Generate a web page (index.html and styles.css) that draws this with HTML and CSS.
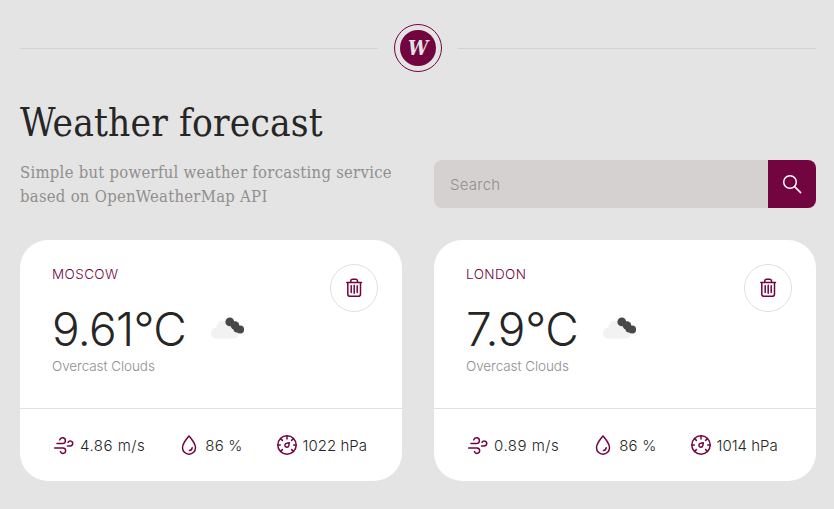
FILE: index.html
```html
<!DOCTYPE html>
<html lang="en">
<head>
<meta charset="utf-8">
<title>Weather forecast</title>
<link rel="stylesheet" href="styles.css">
</head>
<body>
<svg class="sprite" aria-hidden="true">
  <symbol id="trash" viewBox="0 0 24 24"><path d="M4.800 6.400h14.700M5.800 6.400v11.500a2.400 2.400 0 0 0 2.400 2.400h7.900a2.400 2.400 0 0 0 2.400-2.400V6.400M8.800 6.200V5a1.800 1.800 0 0 1 1.800-1.800h3.100A1.800 1.800 0 0 1 15.500 5v1.200M9.200 9.800v6.700M12.200 9.300v8M15.200 9.800v6.700"/></symbol>
  <symbol id="wind" viewBox="0 0 24 24"><path d="M5 10.600h5.500a2.900 2.900 0 1 0-2.800-3.700M15.500 13h2.700a2.500 2.500 0 1 0-2.200-3.700M2.700 15h8.300a2.700 2.700 0 1 1-2.600 3.600"/></symbol>
  <symbol id="drop" viewBox="0 0 24 24"><path d="M12 3C9.500 6 5.500 10.500 5.500 14.700a6.500 6.500 0 0 0 13 0C18.500 10.500 14.500 6 12 3zM15.200 14.700a3.300 3.300 0 0 1-2.700 2.900"/></symbol>
  <symbol id="gauge" viewBox="0 0 24 24"><circle cx="12" cy="12" r="9.200"/><path d="M12 3v3M5.600 5.600l1.800 1.800M3 12h2.300M5.600 18.400l1.800-1.800M18.400 18.400l-1.800-1.800M21 12h-2.300M18.400 5.600l-1.800 1.800M14.300 9.700l-2.500.5a2 2 0 1 0 2 2.500z"/></symbol>
  <symbol id="clouds" viewBox="0 0 36 24"><g class="cloud-light"><circle cx="14" cy="11" r="6.500"/><circle cx="20" cy="13" r="7"/><rect x="2" y="11.700" width="28" height="11" rx="5.500"/></g><g class="cloud-dark"><circle cx="20.800" cy="5.900" r="4.400"/><circle cx="26" cy="9.500" r="4.300"/><circle cx="31.200" cy="13.500" r="3.900"/><circle cx="28" cy="13" r="3.500"/></g></symbol>
</svg>
<main class="page">
  <header class="brand"><span class="rule"></span><span class="ring"><span class="logo">W</span></span><span class="rule"></span></header>
  <section class="intro">
    <div class="copy"><h1>Weather forecast</h1><p>Simple but powerful weather forcasting service<br>based on OpenWeatherMap API</p></div>
    <form class="search"><input type="text" placeholder="Search" aria-label="Search"><button type="button" aria-label="Find"><svg viewBox="0 0 24 24"><circle cx="10" cy="10" r="6.300"/><path d="M14.600 14.600l6 6"/></svg></button></form>
  </section>
  <section class="cards">
    <article class="card">
      <div class="top"><h2>MOSCOW</h2><div class="temperature"><span class="value moscow">9.61°C</span><svg class="clouds"><use href="#clouds"/></svg></div><p class="condition">Overcast Clouds</p><button class="remove" aria-label="Remove Moscow"><svg><use href="#trash"/></svg></button></div>
      <div class="metrics"><span class="speed"><svg><use href="#wind"/></svg>4.86 m/s</span><span class="humidity"><svg><use href="#drop"/></svg>86 %</span><span class="pressure"><svg><use href="#gauge"/></svg>1022 hPa</span></div>
    </article>
    <article class="card">
      <div class="top"><h2>LONDON</h2><div class="temperature"><span class="value london">7.9°C</span><svg class="clouds"><use href="#clouds"/></svg></div><p class="condition">Overcast Clouds</p><button class="remove" aria-label="Remove London"><svg><use href="#trash"/></svg></button></div>
      <div class="metrics"><span class="speed"><svg><use href="#wind"/></svg>0.89 m/s</span><span class="humidity"><svg><use href="#drop"/></svg>86 %</span><span class="pressure"><svg><use href="#gauge"/></svg>1014 hPa</span></div>
    </article>
  </section>
</main>
</body>
</html>
```
FILE: styles.css
```css
* { box-sizing: border-box; }
body { margin: 0; background: #e4e4e4; color: #262626; font-family: Inter, sans-serif; font-weight: 300; }
h1, h2, p { margin: 0; font-weight: inherit; }
svg { fill: none; stroke: currentColor; stroke-width: 1.5; stroke-linecap: round; stroke-linejoin: round; flex: none; }
.sprite { display: none; }
.page { padding: 24px 18px 28px 20px; }
.brand { display: flex; align-items: center; gap: 16px; height: 48px; }
.rule { flex: 1; height: 1px; background: #d4d2d2; }
.ring { width: 48px; height: 48px; padding: 5px; border: 1px solid #720440; border-radius: 50%; }
.logo { display: block; height: 36px; border-radius: 50%; background: #720440; color: #e4e4e4; text-align: center; font: italic bold 20px/37px "DejaVu Serif Condensed", serif; }
.intro { display: grid; grid-template-columns: 382px 382px; gap: 32px; height: 136px; align-items: end; }
.copy { margin-bottom: -1px; font-family: "DejaVu Serif Condensed", "DejaVu Serif", serif; font-weight: 400; }
h1 { font-size: 38.5px; line-height: 48px; margin-bottom: 14px; letter-spacing: .15px; white-space: nowrap; }
.copy p { color: #918e8e; font-size: 16.5px; line-height: 24px; letter-spacing: .28px; white-space: nowrap; }
.search { display: flex; height: 48px; border-radius: 8px; overflow: hidden; }
.search input { flex: 1; min-width: 0; border: 0; padding: 0 16px; background: #d5d1d0; font: 300 15px Inter, sans-serif; letter-spacing: .25px; }
.search input::placeholder { color: #918e8e; opacity: 1; }
.search button { width: 48px; border: 0; padding: 12px; background: #720440; color: #fff; }
.search svg { display: block; width: 24px; height: 24px; }
.cards { display: grid; grid-template-columns: 382px 382px; gap: 32px; margin-top: 32px; }
.card { height: 241px; background: #fff; border-radius: 28px; }
.top { position: relative; height: 169px; padding: 24px 32px; border-bottom: 1px solid #e0e0e0; }
h2 { color: #720440; font-size: 13.5px; line-height: 20px; letter-spacing: .4px; }
.temperature { display: flex; align-items: center; gap: 23px; height: 48px; margin-top: 20px; }
.value { font-size: 46px; line-height: 50px; padding-top: 2px; white-space: nowrap; }
.moscow { letter-spacing: -.65px; }
.london { letter-spacing: -.4px; }
.clouds { width: 36px; height: 24px; stroke: none; }
.cloud-dark { fill: #484848; }
.cloud-light { fill: #f2f2f2; }
.condition { margin-top: 4px; color: #918e8e; font-size: 13.5px; line-height: 20px; letter-spacing: -.07px; }
.remove { position: absolute; top: 24px; right: 24px; width: 48px; height: 48px; padding: 11px; border: 1px solid #e0e0e0; border-radius: 50%; background: #fff; color: #720440; }
.remove svg { display: block; width: 24px; height: 24px; }
.metrics { display: flex; gap: 32px; height: 72px; padding: 0 32px; align-items: center; font-size: 15px; }
.metrics span { display: flex; align-items: center; gap: 4px; white-space: nowrap; }
.speed { letter-spacing: .5px; }
.humidity { letter-spacing: .2px; }
.metrics svg { width: 24px; height: 24px; color: #720440; }
```
